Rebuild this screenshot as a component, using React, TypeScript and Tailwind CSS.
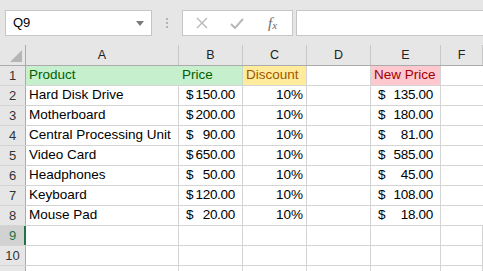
import React from "react";

const cols = [
  { key: "A", w: "w-[153px]" },
  { key: "B", w: "w-[64px]" },
  { key: "C", w: "w-[64px]" },
  { key: "D", w: "w-[64px]" },
  { key: "E", w: "w-[70px]" },
  { key: "F", w: "flex-1" },
];

type Row = { name: string; price: string; disc: string; newPrice: string };

const data: Row[] = [
  { name: "Hard Disk Drive", price: "150.00", disc: "10%", newPrice: "135.00" },
  { name: "Motherboard", price: "200.00", disc: "10%", newPrice: "180.00" },
  { name: "Central Processing Unit", price: "90.00", disc: "10%", newPrice: "81.00" },
  { name: "Video Card", price: "650.00", disc: "10%", newPrice: "585.00" },
  { name: "Headphones", price: "50.00", disc: "10%", newPrice: "45.00" },
  { name: "Keyboard", price: "120.00", disc: "10%", newPrice: "108.00" },
  { name: "Mouse Pad", price: "20.00", disc: "10%", newPrice: "18.00" },
];

function RowHead({ n, selected }: { n?: number; selected?: boolean }) {
  return (
    <div
      className={`relative w-[26px] shrink-0 h-full border-r border-[#ababab] flex items-center justify-center text-[13px] ${
        selected ? "bg-[#d2d2d2] text-[#217346]" : "bg-[#e6e6e6] text-[#333]"
      }`}
    >
      {n}
      {selected && <div className="absolute right-[-1px] top-0 h-full w-[2px] bg-[#217346]" />}
    </div>
  );
}

// accounting format: "$" pinned left, amount pinned right
function Money({ value, w, pl, pr }: { value: string; w: string; pl: string; pr: string }) {
  return (
    <div className={`${w} shrink-0 h-full border-r border-[#d4d4d4] flex items-center justify-between ${pl} ${pr}`}>
      <span>$</span>
      <span className="tracking-[-0.3px]">{value}</span>
    </div>
  );
}

export default function App() {
  return (
    <div className="w-[483px] h-[271px] overflow-hidden bg-[#e6e6e6] font-['Liberation_Sans',Arial,sans-serif] text-black select-none">
      {/* formula bar */}
      <div className="h-[45px] flex items-start pt-[10px] pl-[5px]">
        <div className="w-[147px] h-[26px] shrink-0 bg-white border border-[#c6c6c6] flex items-center justify-between pl-[7px] pr-[7px] text-[13px]">
          <span>Q9</span>
          <svg width="8" height="5" viewBox="0 0 8 5">
            <path d="M0 0h8L4 5z" fill="#7a7a7a" />
          </svg>
        </div>
        <div className="w-[30px] h-[26px] shrink-0 flex flex-col items-center justify-center gap-[2px]">
          <div className="w-[2px] h-[2px] bg-[#b4b4b4]" />
          <div className="w-[2px] h-[2px] bg-[#b4b4b4]" />
          <div className="w-[2px] h-[2px] bg-[#b4b4b4]" />
        </div>
        <div className="w-[111px] h-[26px] shrink-0 bg-white border border-[#c6c6c6] flex items-center">
          <div className="w-[36px] flex justify-center pl-[2px]">
            <svg width="12" height="12" viewBox="0 0 12 12">
              <path d="M1 1l10 10M11 1L1 11" stroke="#b8b8b8" strokeWidth="1.4" fill="none" />
            </svg>
          </div>
          <div className="w-[36px] flex justify-center">
            <svg width="14" height="11" viewBox="0 0 14 11">
              <path d="M1 6l4 4 8-9" stroke="#b8b8b8" strokeWidth="2" fill="none" />
            </svg>
          </div>
          <div className="flex-1 flex justify-center items-end font-['Liberation_Serif',serif] italic text-[#6b6b6b] text-[15px] leading-none pr-[2px]">
            f<span className="text-[11px]">x</span>
          </div>
        </div>
        <div className="flex-1 ml-[3px] h-[26px] bg-white border border-[#c6c6c6] border-r-0" />
      </div>

      {/* column headers */}
      <div className="h-[21px] flex border-b border-[#ababab] text-[12.5px] text-[#222]">
        <div className="w-[26px] shrink-0 h-full border-r border-[#ababab] flex items-end justify-end pr-[3px] pb-[3px]">
          <svg width="12" height="12" viewBox="0 0 12 12">
            <path d="M12 0V12H0z" fill="#b5b5b5" />
          </svg>
        </div>
        {cols.map((c) => (
          <div
            key={c.key}
            className={`${c.w} shrink-0 h-full border-r border-[#c8c8c8] flex items-center justify-center pt-[1px]`}
          >
            {c.key}
          </div>
        ))}
      </div>

      {/* grid */}
      <div className="bg-white text-[13.5px]">
        <div className="h-[20px] flex border-b border-[#d4d4d4]">
          <RowHead n={1} />
          <div className="w-[217px] shrink-0 h-full bg-[#c6efce] text-[#006100] border-r border-[#c9d8cb] flex items-center">
            <div className="w-[153px] pl-[3px]">Product</div>
            <div className="pl-[3px]">Price</div>
          </div>
          <div className="w-[64px] shrink-0 h-full bg-[#ffeb9c] text-[#9c5700] border-r border-[#d4d4d4] flex items-center pl-[3px]">
            Discount
          </div>
          <div className="w-[64px] shrink-0 h-full border-r border-[#d4d4d4]" />
          <div className="w-[70px] shrink-0 h-full bg-[#ffc7ce] text-[#9c0006] border-r border-[#d4d4d4] flex items-center pl-[3px]">
            New Price
          </div>
          <div className="flex-1 h-full" />
        </div>
        {data.map((r, i) => (
          <div key={r.name} className="h-[20px] flex border-b border-[#d4d4d4]">
            <RowHead n={i + 2} />
            <div className="w-[153px] shrink-0 h-full border-r border-[#d4d4d4] flex items-center pl-[3px] whitespace-nowrap">
              {r.name}
            </div>
            <Money value={r.price} w="w-[64px]" pl="pl-[7px]" pr="pr-[7px]" />
            <div className="w-[64px] shrink-0 h-full border-r border-[#d4d4d4] flex items-center justify-end pr-[3px]">
              {r.disc}
            </div>
            <div className="w-[64px] shrink-0 h-full border-r border-[#d4d4d4]" />
            <Money value={r.newPrice} w="w-[70px]" pl="pl-[7px]" pr="pr-[7px]" />
            <div className="flex-1 h-full" />
          </div>
        ))}
        {[9, 10, 11].map((n) => (
          <div key={n} className="h-[20px] flex border-b border-[#d4d4d4]">
            <RowHead n={n < 11 ? n : undefined} selected={n === 9} />
            {cols.map((c) => (
              <div key={c.key} className={`${c.w} shrink-0 h-full border-r border-[#d4d4d4]`} />
            ))}
          </div>
        ))}
      </div>
    </div>
  );
}
